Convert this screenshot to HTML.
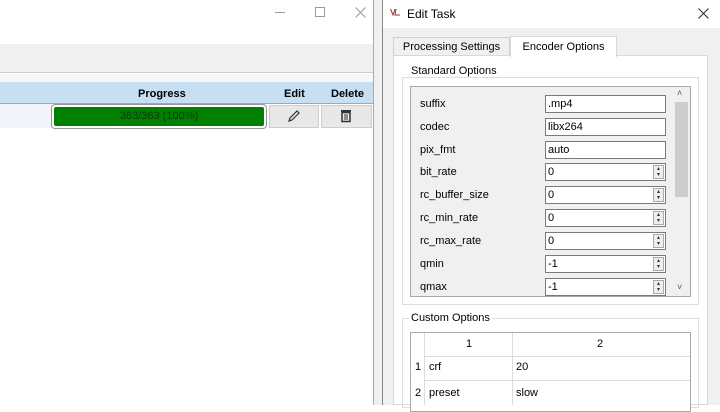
<!DOCTYPE html>
<html><head><style>
*{margin:0;padding:0;box-sizing:border-box}
body{width:720px;height:405px;overflow:hidden;background:#fff;font-family:"Liberation Sans",sans-serif;font-size:11px;color:#000;position:relative}
.a{position:absolute}
.lbl{position:absolute;left:420px;font-size:11px}
.fld{position:absolute;left:545px;width:121px;height:18px;border:1px solid #7a7a7a;background:#fff;padding-left:2px;line-height:16px;font-size:11px}
.spin{position:absolute;right:1px;top:1px;width:11px;height:14px;border:1px solid #aaa;background:#eee;font-size:6px;line-height:6px;text-align:center;color:#333}
</style></head><body>
<div class="a" style="left:0;top:0;width:374px;height:44px;background:#fff"></div>
<div class="a" style="left:275px;top:12px;width:10px;height:1px;background:#999"></div>
<div class="a" style="left:315px;top:7px;width:10px;height:10px;border:1px solid #999"></div>
<svg class="a" style="left:355px;top:7px" width="11" height="11"><path d="M0.5 0.5L10.5 10.5M10.5 0.5L0.5 10.5" stroke="#999" stroke-width="1"/></svg>
<div class="a" style="left:0;top:44px;width:374px;height:29px;background:#f0f0f0;border-bottom:1px solid #ccc"></div>
<div class="a" style="left:0;top:74px;width:374px;height:8px;background:#f7f7f7"></div>
<div class="a" style="left:0;top:82px;width:373px;height:22px;background:#c6dff3;border-bottom:1px solid #9ab"></div>
<div class="a" style="left:138px;top:88px;font-weight:bold">Progress</div>
<div class="a" style="left:284px;top:88px;font-weight:bold">Edit</div>
<div class="a" style="left:331px;top:88px;font-weight:bold">Delete</div>
<div class="a" style="left:0;top:104px;width:52px;height:24px;background:#f3f3fa"></div>
<div class="a" style="left:51px;top:104px;width:216px;height:25px;border:1px solid #999;border-radius:4px;background:#fff"></div>
<div class="a" style="left:54px;top:107px;width:210px;height:19px;background:#008000;border-radius:2px;color:#0a3a0a;text-align:center;line-height:19px">363/363 (100%)</div>
<div class="a" style="left:269px;top:105px;width:50px;height:23px;background:#e8e8e8;border:1px solid #ccc"></div>
<svg class="a" style="left:287px;top:109px" width="14" height="14"><path d="M2 12L3 9L10 2L12 4L5 11Z" fill="none" stroke="#333" stroke-width="1.2"/></svg>
<div class="a" style="left:321px;top:105px;width:51px;height:23px;background:#e8e8e8;border:1px solid #ccc"></div>
<svg class="a" style="left:340px;top:109px" width="12" height="14"><rect x="2" y="3.5" width="8" height="9" fill="none" stroke="#333" stroke-width="1.5"/><rect x="1" y="1" width="10" height="2" fill="#333"/><line x1="5" y1="5" x2="5" y2="11" stroke="#333"/><line x1="7" y1="5" x2="7" y2="11" stroke="#333"/></svg>
<div class="a" style="left:373px;top:0;width:1px;height:405px;background:#aaa"></div>
<div class="a" style="left:374px;top:0;width:8px;height:405px;background:#f0f0f0"></div>
<div class="a" style="left:382px;top:0;width:1px;height:405px;background:#888"></div>
<div class="a" style="left:383px;top:0;width:337px;height:28px;background:#fff"></div>
<svg class="a" style="left:390px;top:8px" width="14" height="9"><path d="M0.5 1L3 7L5 1M6 1L5 7H10" fill="none" stroke="#933" stroke-width="1"/></svg>
<div class="a" style="left:407px;top:7px;font-size:12px">Edit Task</div>
<svg class="a" style="left:698px;top:8px" width="11" height="11"><path d="M0.5 0.5L10.5 10.5M10.5 0.5L0.5 10.5" stroke="#333" stroke-width="1.1"/></svg>
<div class="a" style="left:383px;top:28px;width:337px;height:377px;background:#f0f0f0"></div>
<div class="a" style="left:393px;top:37px;width:117px;height:19px;background:#f0f0f0;border:1px solid #d0d0d0;border-bottom:none;text-align:center;line-height:19px;font-size:11px">Processing Settings</div>
<div class="a" style="left:393px;top:55px;width:315px;height:350px;background:#fff;border:1px solid #d8d8d8"></div>
<div class="a" style="left:510px;top:36px;width:107px;height:21px;background:#fff;border:1px solid #d8d8d8;border-bottom:none;text-align:center;line-height:20px;font-size:11px">Encoder Options</div>
<div class="a" style="left:402px;top:77px;width:297px;height:228px;border:1px solid #ddd"></div>
<div class="a" style="left:409px;top:65px;background:#fff;padding:0 2px;font-size:11px">Standard Options</div>
<div class="a" style="left:410px;top:86px;width:281px;height:211px;background:#f0f0f0;border:1px solid #aaa"></div>
<div class="a" style="left:674px;top:87px;width:15px;height:209px;background:#f0f0f0"></div>
<div class="a" style="left:675px;top:102px;width:13px;height:95px;background:#cdcdcd"></div>
<div class="a" style="left:677px;top:88px;font-size:9px;color:#555">˄</div>
<div class="a" style="left:677px;top:282px;font-size:9px;color:#555">˅</div>
<div class="lbl" style="top:98px">suffix</div><div class="fld" style="top:95px">.mp4</div>
<div class="lbl" style="top:121px">codec</div><div class="fld" style="top:118px">libx264</div>
<div class="lbl" style="top:144px">pix_fmt</div><div class="fld" style="top:141px">auto</div>
<div class="lbl" style="top:166px">bit_rate</div><div class="fld" style="top:163px">0<div class="spin">▴<br>▾</div></div>
<div class="lbl" style="top:189px">rc_buffer_size</div><div class="fld" style="top:186px">0<div class="spin">▴<br>▾</div></div>
<div class="lbl" style="top:212px">rc_min_rate</div><div class="fld" style="top:209px">0<div class="spin">▴<br>▾</div></div>
<div class="lbl" style="top:235px">rc_max_rate</div><div class="fld" style="top:232px">0<div class="spin">▴<br>▾</div></div>
<div class="lbl" style="top:258px">qmin</div><div class="fld" style="top:255px">-1<div class="spin">▴<br>▾</div></div>
<div class="lbl" style="top:281px">qmax</div><div class="fld" style="top:278px">-1<div class="spin">▴<br>▾</div></div>
<div class="a" style="left:402px;top:318px;width:297px;height:90px;border:1px solid #ddd"></div>
<div class="a" style="left:409px;top:312px;background:#fff;padding:0 2px;font-size:11px">Custom Options</div>
<div class="a" style="left:410px;top:332px;width:281px;height:80px;background:#fff;border:1px solid #aaa"></div>
<div class="a" style="left:424px;top:333px;width:1px;height:72px;background:#ddd"></div>
<div class="a" style="left:512px;top:333px;width:1px;height:72px;background:#ddd"></div>
<div class="a" style="left:424px;top:356px;width:266px;height:1px;background:#ddd"></div>
<div class="a" style="left:424px;top:380px;width:266px;height:1px;background:#ddd"></div>
<div class="a" style="left:466px;top:338px">1</div>
<div class="a" style="left:597px;top:338px">2</div>
<div class="a" style="left:415px;top:361px">1</div><div class="a" style="left:429px;top:361px">crf</div><div class="a" style="left:516px;top:361px">20</div>
<div class="a" style="left:415px;top:387px">2</div><div class="a" style="left:429px;top:387px">preset</div><div class="a" style="left:516px;top:387px">slow</div>
</body></html>
